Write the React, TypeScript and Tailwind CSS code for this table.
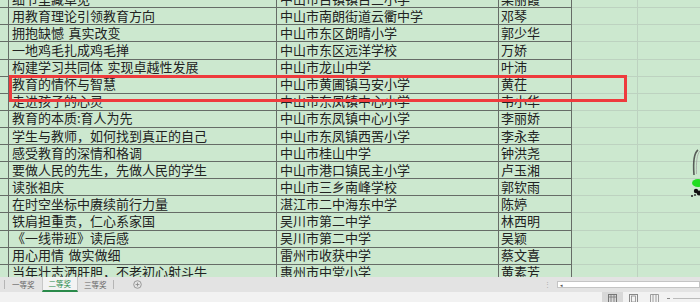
const rows: [string, string, string][] = [
  ["细节里藏卓见", "中山市古镇镇古三小学", "梁丽霞"],
  ["用教育理论引领教育方向", "中山市南朗街道云衢中学", "邓琴"],
  ["拥抱缺憾 真实改变", "中山市东区朗晴小学", "郭少华"],
  ["一地鸡毛扎成鸡毛掸", "中山市东区远洋学校", "万娇"],
  ["构建学习共同体 实现卓越性发展", "中山市龙山中学", "叶沛"],
  ["教育的情怀与智慧", "中山市黄圃镇马安小学", "黄茌"],
  ["走进孩子的心灵", "中山市东凤镇中心小学", "韦小华"],
  ["教育的本质:育人为先", "中山市东凤镇中心小学", "李丽娇"],
  ["学生与教师，如何找到真正的自己", "中山市东凤镇西罟小学", "李永幸"],
  ["感受教育的深情和格调", "中山市桂山中学", "钟洪尧"],
  ["要做人民的先生，先做人民的学生", "中山市港口镇民主小学", "卢玉湘"],
  ["读张祖庆", "中山市三乡南峰学校", "郭钦雨"],
  ["在时空坐标中赓续前行力量", "湛江市二中海东中学", "陈婷"],
  ["铁肩担重责，仁心系家国", "吴川市第二中学", "林西明"],
  ["《一线带班》读后感", "吴川市第二中学", "吴颖"],
  ["用心用情 做实做细", "雷州市收获中学", "蔡文喜"],
  ["当年壮志洒肝胆，不老初心射斗牛", "惠州市中堂小学", "黄素芳"],
];

function Row({ cells }: { cells: [string, string, string] }) {
  return (
    <div className="flex h-[17.1px] shrink-0">
      <div className="w-[9px] shrink-0 border-r border-b border-[#666c67]" />
      <div className="w-[268px] shrink-0 flex items-center pl-[3px] pb-[2px] whitespace-nowrap overflow-hidden [word-spacing:1.5px] border-r border-b border-[#666c67]">
        {cells[0]}
      </div>
      <div className="w-[222px] shrink-0 flex items-center pl-[3px] pb-[2px] whitespace-nowrap overflow-hidden border-r border-b border-[#666c67]">
        {cells[1]}
      </div>
      <div className="w-[73px] shrink-0 flex items-center pl-[2px] pb-[2px] whitespace-nowrap overflow-hidden border-r border-b border-[#666c67]">
        {cells[2]}
      </div>
      <div className="w-[66px] shrink-0 border-r border-b border-[#bdd2c0]" />
      <div className="flex-1 border-b border-[#bdd2c0]" />
    </div>
  );
}

export default function App() {
  return (
    <div className="relative w-[700px] h-[302px] overflow-hidden bg-[#cce8cf] font-['Noto_Sans_CJK_SC',sans-serif] text-[#222] text-[13px] leading-none">
      {/* Sheet */}
      <div className="h-[277px] overflow-hidden">
        <div className="-mt-[8.8px] flex flex-col">
          {rows.map((r, i) => (
            <Row key={i} cells={r} />
          ))}
        </div>
      </div>

      {/* Sheet tabs */}
      <div className="flex h-[15px] items-stretch bg-[#e3e3e3] text-[7.5px] text-[#666]">
        <div className="my-[3px] ml-[4px] w-px bg-[#b5b5b5]" />
        <div className="flex items-center px-[7px]">一等奖</div>
        <div className="flex items-center border-x border-[#c8c8c8] bg-[#f3f3f3] px-[6px] text-[#2a8a4a] border-b-2 border-b-[#2a8a4a]">
          二等奖
        </div>
        <div className="flex items-center px-[6px]">三等奖</div>
        <div className="my-[3px] w-px bg-[#b5b5b5]" />
        <div className="ml-[19px] flex items-center">
          <svg width="9" height="9" viewBox="0 0 9 9">
            <circle cx="4.5" cy="4.5" r="3.8" fill="none" stroke="#888" strokeWidth="0.8" />
            <path d="M4.5 2.6v3.8M2.6 4.5h3.8" stroke="#888" strokeWidth="0.8" />
          </svg>
        </div>
        <div className="ml-auto flex items-center pr-[6px] text-[#aaa] text-[7px]">⋮</div>
        <div className="my-[4px] flex w-[143px] items-center border border-[#c4c4c4] bg-white pl-[2px] text-[5px] text-[#555]">
          ◂
        </div>
      </div>

      {/* Status bar */}
      <div className="flex h-[10px] items-start bg-[#f2f2f2] pl-[602px]">
        <div className="flex h-[10px] w-[21px] justify-center bg-[#d8d8d8] pt-[2px]">
          <svg width="9" height="8" viewBox="0 0 9 8">
            <rect x="0.5" y="0.5" width="8" height="8" fill="none" stroke="#777" />
            <path d="M0.5 3h8M3 0.5v8M6 0.5v8" stroke="#777" strokeWidth="0.8" />
          </svg>
        </div>
        <div className="ml-[6px] pt-[2px]">
          <svg width="9" height="8" viewBox="0 0 9 8">
            <rect x="0.5" y="0.5" width="8" height="8" fill="none" stroke="#888" />
            <rect x="2.5" y="2" width="4" height="6" fill="none" stroke="#888" strokeWidth="0.8" />
          </svg>
        </div>
        <div className="ml-[12px] pt-[2px]">
          <svg width="9" height="8" viewBox="0 0 9 8">
            <path d="M0.5 8V0.5h8V8M3 0.5v8M6 0.5v8" fill="none" stroke="#888" strokeWidth="0.8" />
          </svg>
        </div>
        <div className="ml-[8px] mt-[6px] h-px w-[3px] bg-[#888]" />
        <div className="ml-[3px] mt-[6px] h-px flex-1 bg-[#bbb]" />
      </div>

      {/* Red highlight annotation */}
      <div className="absolute left-[9px] top-[75px] h-[27px] w-[618px] border-[3px] border-[#ee3b3d]" />

      {/* Partial figure at right edge */}
      <svg className="absolute left-[686px] top-[148px]" width="16" height="52" viewBox="0 0 16 52">
        <path d="M12 2 C8 5 7 14 8 27" fill="none" stroke="#3a3a3a" strokeWidth="1.6" opacity="0.8" />
        <path d="M14 3 C11 6 10 14 10.5 26" fill="none" stroke="#999" strokeWidth="1" opacity="0.7" />
        <ellipse cx="12" cy="35" rx="6" ry="4" fill="#22dd22" />
        <circle cx="10" cy="43" r="2.2" fill="#111" />
        <circle cx="13" cy="45" r="2.4" fill="#111" />
        <circle cx="6" cy="48" r="1" fill="#222" />
        <circle cx="9" cy="47" r="0.9" fill="#222" />
      </svg>
    </div>
  );
}
